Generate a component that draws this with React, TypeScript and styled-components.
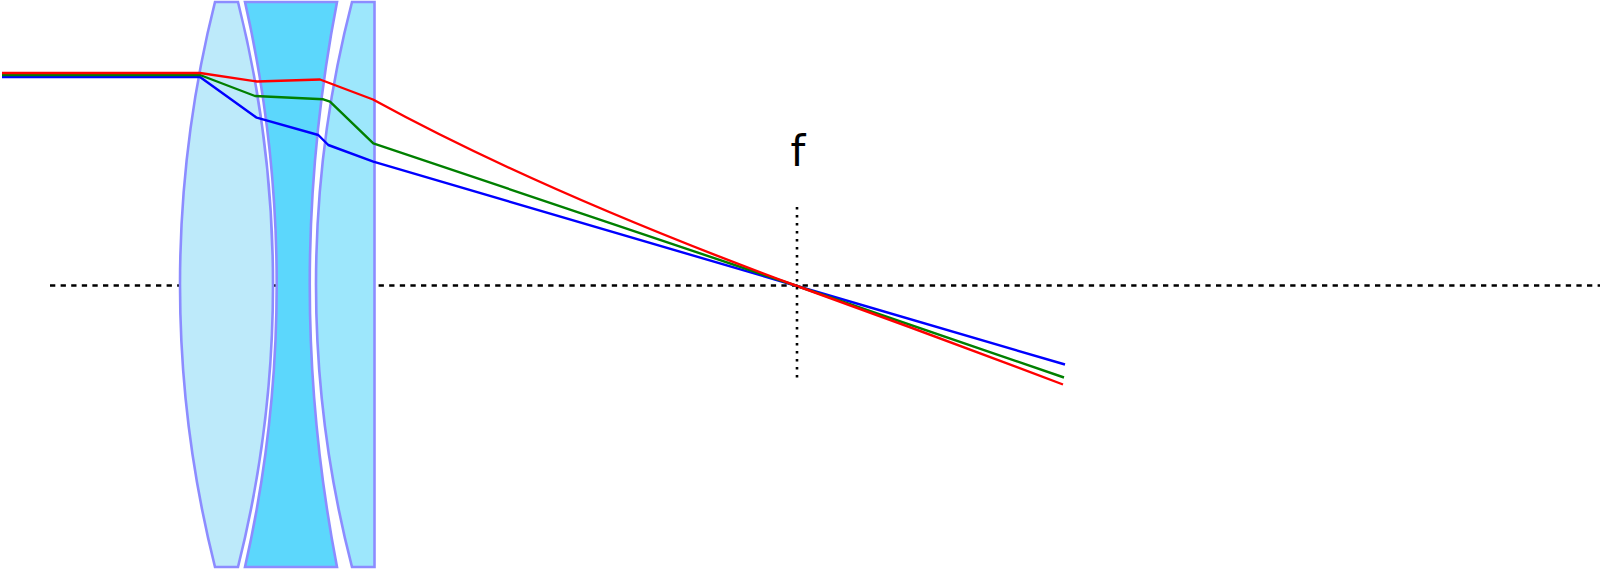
import React from "react";
import styled, { createGlobalStyle } from "styled-components";

const GlobalStyle = createGlobalStyle`
  html, body {
    margin: 0;
    padding: 0;
    background: #ffffff;
  }
`;

const Stage = styled.div`
  width: 1600px;
  height: 569px;
  background: #ffffff;
  overflow: hidden;
`;

const Diagram = styled.svg`
  display: block;
  width: 1600px;
  height: 569px;
`;

const Axis = styled.line`
  stroke: #000000;
  stroke-width: 2.6;
  stroke-dasharray: 5.3 5.3;
`;

const FocalMark = styled.line`
  stroke: #000000;
  stroke-width: 2.6;
  stroke-dasharray: 2.6 5.4;
`;

const Lens = styled.path<{ $fill: string }>`
  fill: ${(p) => p.$fill};
  stroke: #8c8cff;
  stroke-width: 2.6;
  stroke-linejoin: miter;
`;

const Ray = styled.path<{ $color: string }>`
  fill: none;
  stroke: ${(p) => p.$color};
  stroke-width: 2.4;
  stroke-linejoin: round;
`;

const Label = styled.text`
  font-family: "DejaVu Sans", "Liberation Sans", sans-serif;
  font-size: 42px;
  fill: #000000;
`;

const TOP = 2;
const BOTTOM = 567;

const lenses = [
  {
    // biconvex crown element
    fill: "#bdeafa",
    d: `M215,${TOP} L238,${TOP} A1157.6,1157.6 0 0 1 238,${BOTTOM} L215,${BOTTOM} A1157.6,1157.6 0 0 1 215,${TOP} Z`,
  },
  {
    // biconcave flint element
    fill: "#5cd7fc",
    d: `M245,${TOP} L337,${TOP} A1491.4,1491.4 0 0 0 337,${BOTTOM} L245,${BOTTOM} A1274.6,1274.6 0 0 0 245,${TOP} Z`,
  },
  {
    // plano-convex element
    fill: "#9de7fc",
    d: `M352,${TOP} L374.5,${TOP} L374.5,${BOTTOM} L352,${BOTTOM} A1126.4,1126.4 0 0 1 352,${TOP} Z`,
  },
];

const FOCUS = { x: 797, y: 286 };

const rays = [
  {
    color: "#0000ff",
    d: `M2,77 L200,77 L256.7,117.7 L318.3,135 L328.3,145 L373.3,161.7 L${FOCUS.x},${FOCUS.y} L1065,364.5`,
  },
  {
    color: "#008000",
    d: `M2,75 L200,75 L255,96 L323.3,99.3 L330,101.7 L373.3,143.3 L${FOCUS.x},${FOCUS.y} L1064,377.5`,
  },
  {
    color: "#ff0000",
    d: `M2,73 L200,73 L257,81.5 L320,79.5 L373,99.5 Q540,191 ${FOCUS.x},${FOCUS.y} Q930,334 1063,384.5`,
  },
];

export default function App() {
  return (
    <>
      <GlobalStyle />
      <Stage>
        <Diagram viewBox="0 0 1600 569" xmlns="http://www.w3.org/2000/svg">
          <Axis x1={50} y1={285.5} x2={1600} y2={285.5} />
          {lenses.map((l, i) => (
            <Lens key={i} d={l.d} $fill={l.fill} />
          ))}
          {rays.map((r) => (
            <Ray key={r.color} d={r.d} $color={r.color} />
          ))}
          <FocalMark x1={FOCUS.x} y1={207} x2={FOCUS.x} y2={378} />
          <Label x={798} y={166} textAnchor="middle">
            f
          </Label>
        </Diagram>
      </Stage>
    </>
  );
}
